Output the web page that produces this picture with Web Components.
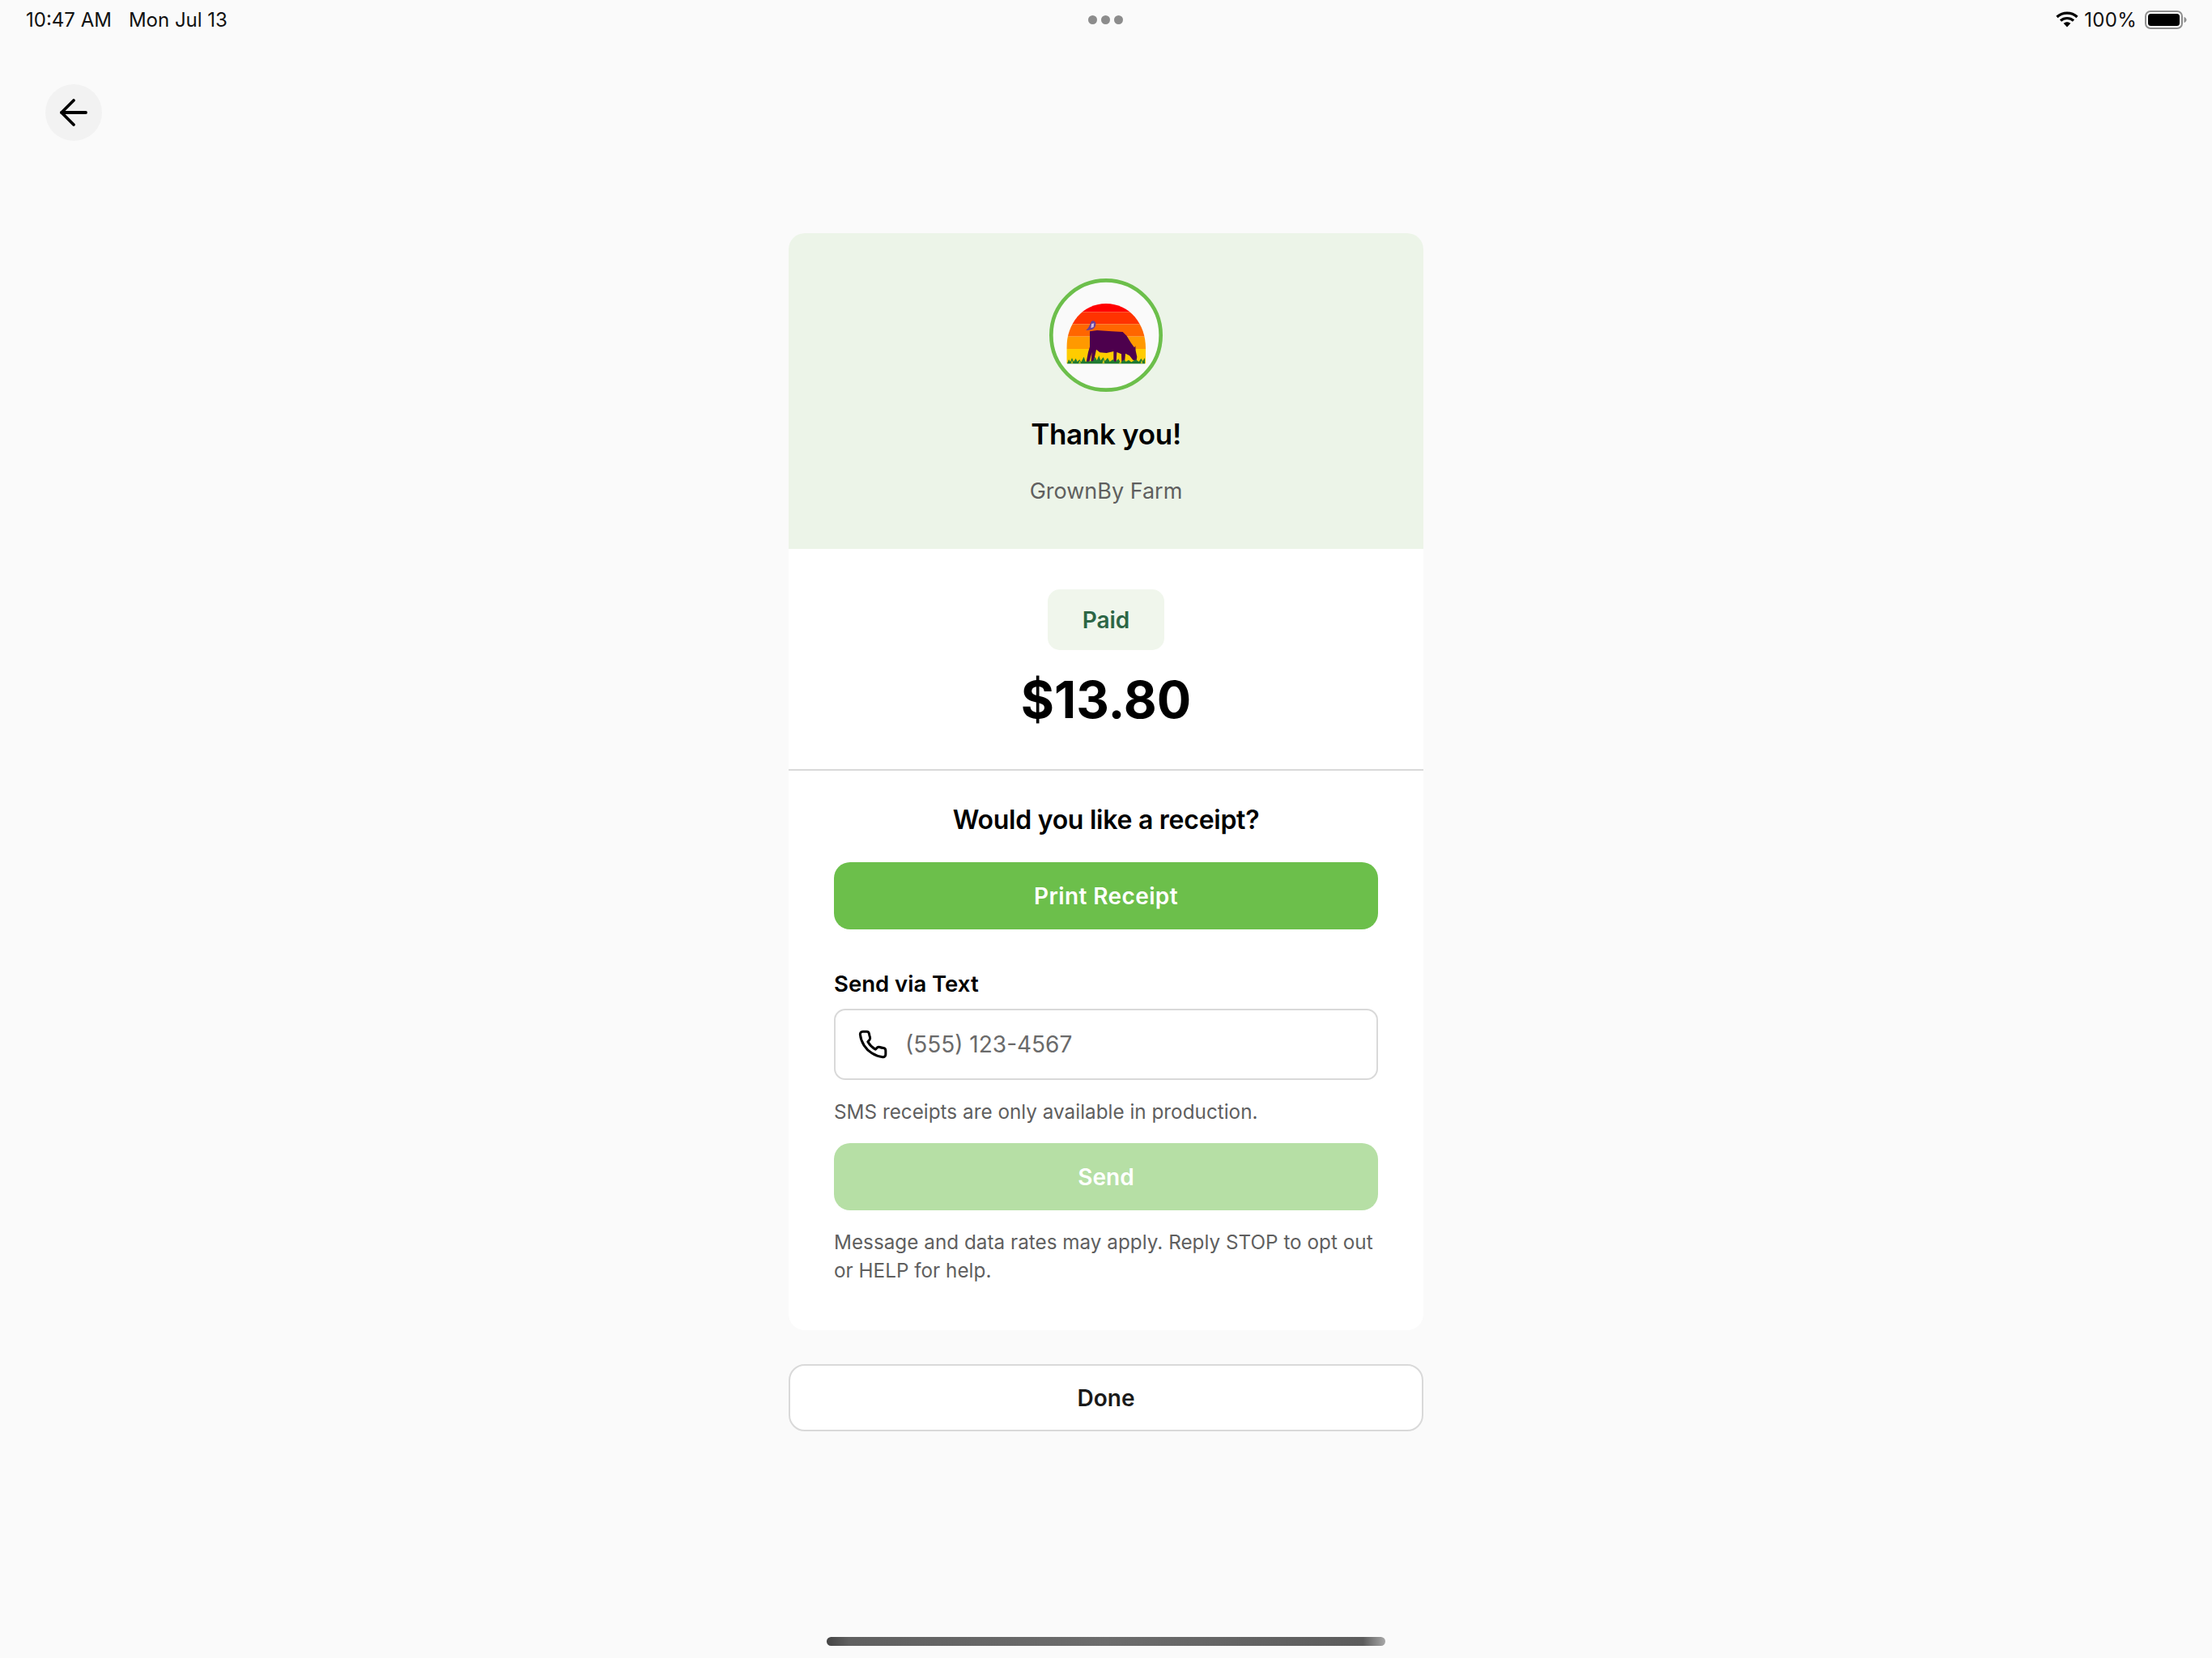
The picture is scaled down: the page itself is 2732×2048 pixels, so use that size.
<!DOCTYPE html>
<html>
<head>
<meta charset="utf-8">
<title>Thank you</title>
<style>
    html, body { margin: 0; padding: 0; }
    body { background: #fafafa; font-family: Inter, "Liberation Sans", sans-serif; color: #000; }
</style>
</head>
<body>
<checkout-page>
    <status-bar slot="status"></status-bar>
    <back-button slot="nav"></back-button>
    <receipt-card slot="card">
        <thank-header slot="header" farm="GrownBy Farm"></thank-header>
        <paid-summary slot="summary" amount="$13.80"></paid-summary>
        <span slot="title">Would you like a receipt?</span>
        <action-button slot="print" kind="primary" style="letter-spacing: 0.4px">Print Receipt</action-button>
        <phone-field slot="phone" label="Send via Text" placeholder="(555) 123-4567"></phone-field>
        <span slot="hint">SMS receipts are only available in production.</span>
        <action-button slot="send" kind="disabled">Send</action-button>
        <span slot="legal">Message and data rates may apply. Reply STOP to opt out or HELP for help.</span>
    </receipt-card>
    <action-button slot="done" kind="outline">Done</action-button>
</checkout-page>

<script>
class CheckoutPage extends HTMLElement {
    constructor() {
        super()
        this.attachShadow({mode: 'open'})
        this.shadowRoot.innerHTML = `
            <style>
                :host { display: flex; flex-direction: column; width: 2732px; height: 2048px; overflow: hidden; }
                .nav { padding: 56px 0 0 56px; height: 240px; box-sizing: border-box; }
                .center { display: flex; flex-direction: column; align-items: center; gap: 42px; }
                .spacer { flex: 1; }
                .home { align-self: center; width: 690px; height: 11px; margin-bottom: 15px; border-radius: 6px;
                        background: linear-gradient(90deg, #454545 0, #606060 4%, #6c6c6c 50%, #5c5c5c 96%, #a8a8a8 100%); }
                ::slotted([slot=done]) { width: 784px; }
            </style>
            <slot name="status"></slot>
            <div class="nav"><slot name="nav"></slot></div>
            <div class="center">
                <slot name="card"></slot>
                <slot name="done"></slot>
            </div>
            <div class="spacer"></div>
            <div class="home"></div>
        `
    }
}

class StatusBar extends HTMLElement {
    constructor() {
        super()
        this.attachShadow({mode: 'open'})
        this.shadowRoot.innerHTML = `
            <style>
                :host { display: grid; grid-template-columns: 1fr auto 1fr; align-items: center; height: 48px;
                        padding: 0 31px 0 29px; font-size: 24px; color: #111; }
                .left { display: flex; gap: 21px; margin-left: 3px; }
                .dots { display: flex; gap: 5px; margin-left: 1px; }
                .dots i { width: 11px; height: 11px; border-radius: 50%; background: #8c8c8c; }
                .right { display: flex; justify-content: flex-end; align-items: center; gap: 10px; }
                .wifi { margin-right: -3px; }
                svg { display: block; }
            </style>
            <div class="left"><span>10:47 AM</span><span>Mon Jul 13</span></div>
            <div class="dots"><i></i><i></i><i></i></div>
            <div class="right">
                <svg class="wifi" width="28" height="22" viewBox="0 0 28 22">
                    <path d="M1.5 8 C8.5 1.5 19.5 1.5 26.5 8 M6 12.5 C10.5 8.5 17.5 8.5 22 12.5" fill="none" stroke="#000" stroke-width="3.2"/>
                    <path d="M9.6 15.8 C12.2 13.6 15.8 13.6 18.4 15.8 L14 20.5 Z" fill="#000"/>
                </svg>
                <span style="letter-spacing: 0.3px">100%</span>
                <svg width="52" height="23" viewBox="0 0 52 23">
                    <rect x="1" y="1" width="45" height="21" rx="6" fill="none" stroke="#8f8f8f" stroke-width="2"/>
                    <rect x="4" y="4" width="39" height="15" rx="3.5" fill="#000"/>
                    <path d="M48.5 8 C50.5 8.6 51.5 10 51.5 11.500 C51.500 13 50.500 14.400 48.500 15 Z" fill="#8f8f8f"/>
                </svg>
            </div>
        `
    }
}

class BackButton extends HTMLElement {
    constructor() {
        super()
        this.attachShadow({mode: 'open'})
        this.shadowRoot.innerHTML = `
            <style>
                :host { display: flex; align-items: center; justify-content: center; width: 70px; height: 70px;
                        border-radius: 50%; background: #f2f2f2; }
            </style>
            <svg width="36" height="36" viewBox="0 0 36 36" fill="none" stroke="#000" stroke-width="3.8" stroke-linecap="round" stroke-linejoin="round">
                <path d="M33 18H3"/><path d="M18 3L3 18l15 15"/>
            </svg>
        `
    }
}

class ReceiptCard extends HTMLElement {
    constructor() {
        super()
        this.attachShadow({mode: 'open'})
        this.shadowRoot.innerHTML = `
            <style>
                :host { display: block; width: 784px; background: #fff; border-radius: 20px; overflow: hidden; }
                .body { display: flex; flex-direction: column; padding: 40px 56px 56px; }
                .title { font-size: 32px; font-weight: 600; line-height: 42px; text-align: center; margin-bottom: 31px; letter-spacing: -0.26px; }
                .hint { font-size: 24.25px; line-height: 36px; color: #5f5f5f; margin: 22px 0 20px; letter-spacing: 0.02px; }
                .legal { font-size: 24.25px; line-height: 35px; color: #5f5f5f; margin-top: 22px; letter-spacing: 0.02px; }
                .phone { display: block; margin-top: 49px; }
            </style>
            <slot name="header"></slot>
            <slot name="summary"></slot>
            <div class="body">
                <div class="title"><slot name="title"></slot></div>
                <slot name="print"></slot>
                <div class="phone"><slot name="phone"></slot></div>
                <div class="hint"><slot name="hint"></slot></div>
                <slot name="send"></slot>
                <div class="legal"><slot name="legal"></slot></div>
            </div>
        `
    }
}

class FarmLogo extends HTMLElement {
    constructor() {
        super()
        this.attachShadow({mode: 'open'})
        // drawn in a 420 box, three times the size on screen
        this.shadowRoot.innerHTML = `
            <style>
                :host { display: block; width: 140px; height: 140px; }
                svg { display: block; }
            </style>
            <svg width="140" height="140" viewBox="168 72 420 420">
                <defs>
                    <clipPath id="dome"><path d="M232 388V330C232 240 290 165 378 165C466 165 525 240 525 330V388Z"/></clipPath>
                </defs>
                <circle cx="378" cy="282" r="203" fill="#fafafa" stroke="#6cbf4b" stroke-width="14"/>
                <g clip-path="url(#dome)">
                    <rect x="225" y="160" width="310" height="36" fill="#ff0000"/>
                    <rect x="225" y="196" width="310" height="45" fill="#ff3300"/>
                    <rect x="225" y="241" width="310" height="46" fill="#ff6600"/>
                    <rect x="225" y="287" width="310" height="46" fill="#ff9900"/>
                    <rect x="225" y="333" width="310" height="56" fill="#ffcc00"/>
                </g>
                <path d="M318 268L345 264L400 268L440 270L455 285L470 310L483 328L487 322L488 340L493 362L491 376L478 374L465 358L450 350L447 385L436 385L435 352L418 345L416 382L406 382L406 342L380 348L355 346L342 335L332 382L322 382L326 345L316 382L305 382L312 345L318 325Z" fill="#4d004d"/>
                <path d="M234 388L240 372L246 380L252 366L258 380L266 368L272 380L280 372L286 382L296 362L302 380L330 378L338 362L344 376L352 358L358 376L368 364L374 378L384 366L392 380L404 372L412 382L424 370L432 384L444 372L452 380L462 374L472 382L488 372L500 380L508 368L514 378L522 366L522 388Z" fill="#1f7a32"/>
                <path d="M248 386L252 374L256 386ZM276 386L281 376L285 386ZM364 386L369 370L373 386ZM426 386L431 376L435 386ZM506 386L510 374L514 386Z" fill="#c9c21a"/>
                <path d="M304 264C314 256 318 244 322 234C326 226 338 228 340 238C341 250 334 260 322 262C315 263 309 265 304 264Z" fill="#6b3f98"/>
                <path d="M324 240L334 238L332 252L322 256Z" fill="#cdbbe0"/>
            </svg>
        `
    }
}

class ThankHeader extends HTMLElement {
    constructor() {
        super()
        this.attachShadow({mode: 'open'})
    }

    connectedCallback() {
        this.shadowRoot.innerHTML = `
            <style>
                :host { display: flex; flex-direction: column; align-items: center; height: 390px; box-sizing: border-box;
                        padding-top: 56px; background: #ecf4e8; }
                h1 { margin: 29px 0 0; font-size: 35px; line-height: 46px; font-weight: 600; letter-spacing: -0.3px; }
                p { margin: 29px 0 0; font-size: 27px; line-height: 38px; color: #5f5f5f; }
            </style>
            <farm-logo></farm-logo>
            <h1>Thank you!</h1>
            <p>${this.getAttribute('farm')}</p>
        `
    }
}

class PaidSummary extends HTMLElement {
    constructor() {
        super()
        this.attachShadow({mode: 'open'})
    }

    connectedCallback() {
        this.shadowRoot.innerHTML = `
            <style>
                :host { display: flex; flex-direction: column; align-items: center; height: 274px; box-sizing: border-box;
                        padding-top: 50px; border-bottom: 2px solid #d9d9d9; }
                .chip { display: flex; align-items: center; justify-content: center; width: 144px; height: 75px;
                        border-radius: 15px; background: #f0f6ec; color: #2d6645; font-size: 28px; font-weight: 600; }
                .amount { margin-top: 20px; font-size: 63px; line-height: 82px; font-weight: 700; }
            </style>
            <div class="chip">Paid</div>
            <div class="amount">${this.getAttribute('amount')}</div>
        `
    }
}

class PhoneField extends HTMLElement {
    constructor() {
        super()
        this.attachShadow({mode: 'open'})
    }

    connectedCallback() {
        this.shadowRoot.innerHTML = `
            <style>
                :host { display: block; }
                label { display: block; font-size: 27.5px; line-height: 36px; font-weight: 600; margin-bottom: 13px; }
                .box { display: flex; align-items: center; gap: 21px; height: 88px; box-sizing: border-box; padding: 0 27px;
                       background: #fff; border: 2px solid #d9d9d9; border-radius: 14px; }
                .ph { font-size: 28px; color: #6a6a6a; }
                svg { display: block; flex: none; }
            </style>
            <label>${this.getAttribute('label')}</label>
            <div class="box">
                <svg width="38" height="38" viewBox="0 0 24 24" fill="none" stroke="#000" stroke-width="1.9" stroke-linecap="round" stroke-linejoin="round">
                    <path d="M22 16.920v3a2 2 0 0 1-2.180 2 19.790 19.790 0 0 1-8.630-3.070 19.500 19.500 0 0 1-6-6 19.790 19.790 0 0 1-3.070-8.670A2 2 0 0 1 4.110 2h3a2 2 0 0 1 2 1.720c.13.960.36 1.900.7 2.810a2 2 0 0 1-.45 2.110L8.090 9.910a16 16 0 0 0 6 6l1.270-1.270a2 2 0 0 1 2.110-.45c.91.340 1.850.570 2.810.7A2 2 0 0 1 22 16.920z"/>
                </svg>
                <span class="ph">${this.getAttribute('placeholder')}</span>
            </div>
        `
    }
}

class ActionButton extends HTMLElement {
    constructor() {
        super()
        this.attachShadow({mode: 'open'})
        this.shadowRoot.innerHTML = `
            <style>
                :host { display: flex; align-items: center; justify-content: center; height: 83px; box-sizing: border-box;
                        border-radius: 20px; font-size: 28px; font-weight: 600; }
                :host([kind=primary]) { background: #6cbf4b; color: #fff; }
                :host([kind=disabled]) { background: #b6dfa5; color: #fff; }
                :host([kind=outline]) { background: #fff; color: #1a1a1a; border: 2px solid #d9d9d9; }
            </style>
            <slot></slot>
        `
    }
}

customElements.define('checkout-page', CheckoutPage)
customElements.define('status-bar', StatusBar)
customElements.define('back-button', BackButton)
customElements.define('receipt-card', ReceiptCard)
customElements.define('farm-logo', FarmLogo)
customElements.define('thank-header', ThankHeader)
customElements.define('paid-summary', PaidSummary)
customElements.define('phone-field', PhoneField)
customElements.define('action-button', ActionButton)
</script>
</body>
</html>
